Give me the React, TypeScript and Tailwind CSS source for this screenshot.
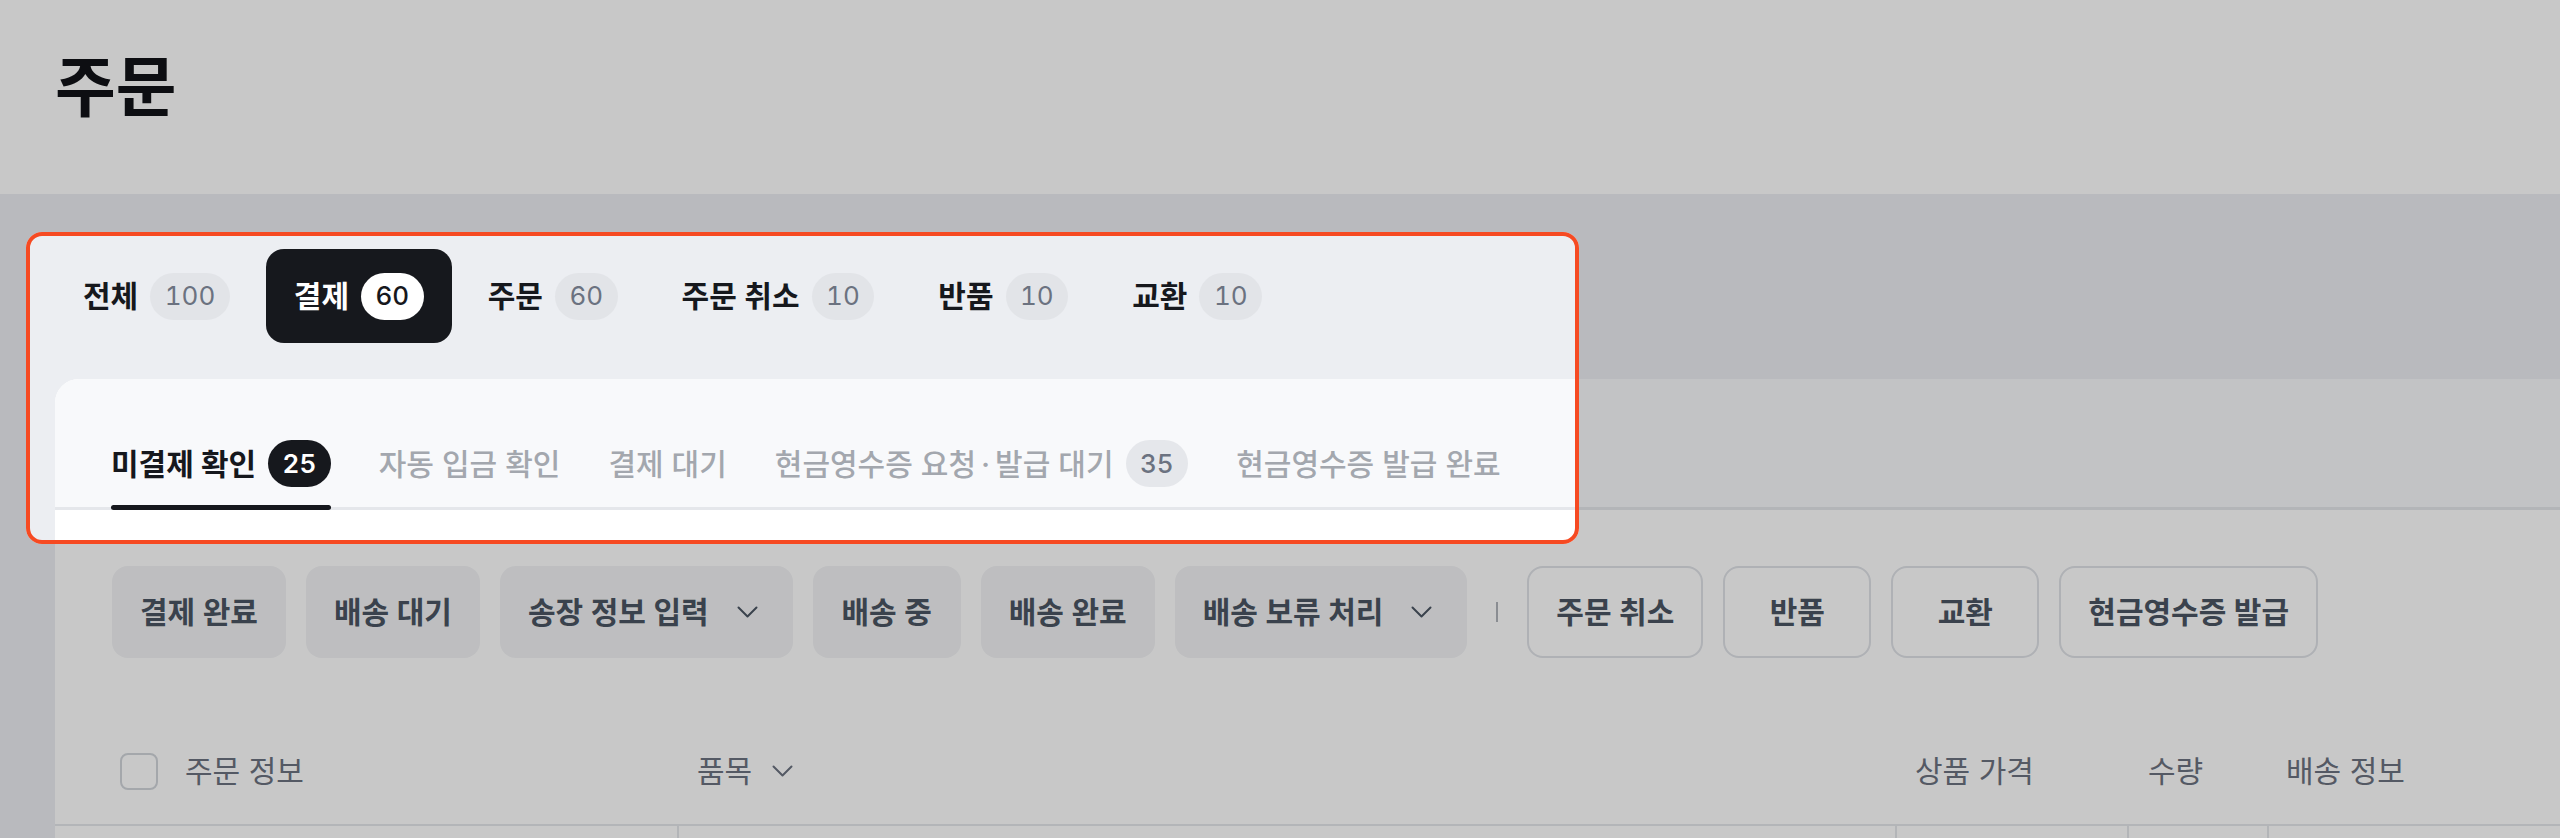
import React from "react";

const topTabs = [
  { label: "전체", count: "100" },
  { label: "결제", count: "60", active: true },
  { label: "주문", count: "60" },
  { label: "주문 취소", count: "10" },
  { label: "반품", count: "10" },
  { label: "교환", count: "10" },
];

const subTabs: { label: React.ReactNode; key: string; count?: string; active?: boolean }[] = [
  { key: "a", label: "미결제 확인", count: "25", active: true },
  { key: "b", label: "자동 입금 확인" },
  { key: "c", label: "결제 대기" },
  {
    key: "d",
    label: (
      <>
        현금영수증 요청<span className="mx-[5px]">·</span>발급 대기
      </>
    ),
    count: "35",
  },
  { key: "e", label: "현금영수증 발급 완료" },
];

const filledButtons = [
  { label: "결제 완료" },
  { label: "배송 대기" },
  { label: "송장 정보 입력", dropdown: true },
  { label: "배송 중" },
  { label: "배송 완료" },
  { label: "배송 보류 처리", dropdown: true },
];

const outlineButtons = ["주문 취소", "반품", "교환", "현금영수증 발급"];

function Chevron({ className }: { className?: string }) {
  return (
    <svg width="21" height="12" viewBox="0 0 21 12" fill="none" className={className}>
      <path
        d="M1.5 1.5L10.5 10.5L19.5 1.5"
        stroke="currentColor"
        strokeWidth="2"
        strokeLinecap="round"
        strokeLinejoin="round"
      />
    </svg>
  );
}

export default function App() {
  return (
    <div className="relative h-[838px] w-full overflow-hidden bg-[#eceef2] font-[family-name:Inter,'Noto_Sans_CJK_KR',sans-serif]">
      {/* Header */}
      <header className="flex h-[194px] items-center bg-white px-[55px] pb-[20px]">
        <h1 className="text-[66px] font-bold leading-none text-[#111317]">주문</h1>
      </header>

      <div className="pl-[55px]">
        {/* Top tabs */}
        <nav className="flex items-center gap-[8px] pt-[55px] pb-[36px]">
          {topTabs.map((t) => (
            <div
              key={t.label}
              className={
                t.active
                  ? "flex h-[94px] items-center gap-[12px] rounded-[18px] bg-[#16181d] px-[28px]"
                  : "flex h-[94px] items-center gap-[12px] rounded-[18px] px-[28px]"
              }
            >
              <span
                className={
                  t.active
                    ? "text-[30px] font-semibold leading-none text-white"
                    : "text-[30px] font-semibold leading-none text-[#16181d]"
                }
              >
                {t.label}
              </span>
              <span
                className={
                  t.active
                    ? "flex h-[47px] items-center rounded-full bg-white px-[14.5px] text-[26px] font-medium tabular-nums leading-none text-[#16181d]"
                    : "flex h-[47px] items-center rounded-full bg-[#e2e4e8] px-[14.5px] text-[26px] font-normal tabular-nums leading-none text-[#6b7280]"
                }
              >
                {t.count}
              </span>
            </div>
          ))}
        </nav>

        {/* Card */}
        <section className="overflow-hidden rounded-tl-[24px] bg-white">
          {/* Sub tabs */}
          <div className="flex gap-[48px] border-b-[3px] border-[#e5e7eb] bg-[#f8f9fb] px-[56px] pt-[61px]">
            {subTabs.map((s) => (
              <div key={s.key} className="relative pb-[20px]">
                <div className="flex h-[47px] items-center gap-[12px]">
                  <span
                    className={
                      s.active
                        ? "text-[30px] font-bold leading-none text-[#16181d]"
                        : "text-[30px] font-medium leading-none text-[#a3a7ae]"
                    }
                  >
                    {s.label}
                  </span>
                  {s.count && (
                    <span
                      className={
                        s.active
                          ? "flex h-[47px] items-center rounded-full bg-[#16181d] px-[14.5px] text-[26px] font-semibold tabular-nums leading-none text-white"
                          : "flex h-[47px] items-center rounded-full bg-[#e5e7eb] px-[14.5px] text-[26px] font-medium tabular-nums leading-none text-[#6b7280]"
                      }
                    >
                      {s.count}
                    </span>
                  )}
                </div>
                {s.active && (
                  <div className="absolute bottom-[-3px] left-0 right-0 h-[5px] rounded-full bg-[#16181d]" />
                )}
              </div>
            ))}
          </div>

          {/* Action buttons */}
          <div className="mt-[56px] flex items-center gap-[20px] px-[57px]">
            {filledButtons.map((b) => (
              <div
                key={b.label}
                className={
                  b.dropdown
                    ? "flex h-[92px] items-center gap-[28px] rounded-[16px] bg-[#f2f3f5] pl-[28px] pr-[35px] text-[#4b5563]"
                    : "flex h-[92px] min-w-[148px] items-center justify-center rounded-[16px] bg-[#f2f3f5] px-[28px] text-[#4b5563]"
                }
              >
                <span className="text-[30px] font-semibold leading-none">{b.label}</span>
                {b.dropdown && <Chevron />}
              </div>
            ))}
            <div className="mx-[9px] h-[20px] w-[2px] bg-[#b0b4bb]" />
            {outlineButtons.map((b) => (
              <div
                key={b}
                className="flex h-[92px] min-w-[148px] items-center justify-center rounded-[16px] border-2 border-[#dfe2e7] bg-white px-[27px] text-[#4b5563]"
              >
                <span className="text-[30px] font-semibold leading-none">{b}</span>
              </div>
            ))}
          </div>

          {/* Table header */}
          <div className="mt-[60px] flex h-[108px] items-center border-b-2 border-[#e5e7eb] text-[30px] leading-none text-[#6b7280]">
            <div className="flex w-[622px] items-center gap-[27px] pl-[65px]">
              <div className="h-[37px] w-[38px] rounded-[8px] border-2 border-[#d1d5db] bg-white" />
              <span>주문 정보</span>
            </div>
            <div className="flex w-[1218px] items-center gap-[20px] pl-[20px]">
              <span>품목</span>
              <Chevron />
            </div>
            <div className="w-[232px] pl-[20px]">상품 가격</div>
            <div className="w-[140px] pl-[21px]">수량</div>
            <div className="flex-1 pl-[19px]">배송 정보</div>
          </div>

          {/* Table body (first row top) */}
          <div className="flex h-[100px]">
            <div className="w-[622px]" />
            <div className="w-[1218px] border-l-2 border-[#e5e7eb]" />
            <div className="w-[232px] border-l-2 border-[#e5e7eb]" />
            <div className="w-[140px] border-l-2 border-[#e5e7eb]" />
            <div className="flex-1 border-l-2 border-[#e5e7eb]" />
          </div>
        </section>
      </div>

      {/* Spotlight overlay */}
      <div className="pointer-events-none absolute left-[26px] top-[232px] h-[312px] w-[1553px] rounded-[16px] border-4 border-[#f64a22] shadow-[0_0_0_4000px_rgba(0,0,0,0.216)]" />
    </div>
  );
}
